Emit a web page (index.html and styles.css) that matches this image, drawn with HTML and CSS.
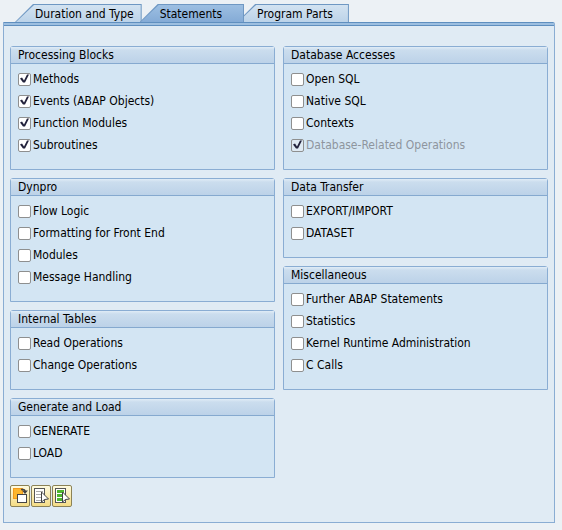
FILE: index.html
```html
<!DOCTYPE html>
<html lang="en">
<head>
  <title>Measurement Variant</title>
  <meta charset="UTF-8">
  <link rel="stylesheet" href="styles.css">
</head>
<body>

<div class="tabs" role="tablist">
  <button class="tab tab-first" role="tab">Duration and Type</button>
  <button class="tab active" role="tab" aria-selected="true">Statements</button>
  <button class="tab" role="tab">Program Parts</button>
</div>

<form class="panel">
  <div class="columns">
    <div class="column">
      <section class="group">
        <h2>Processing Blocks</h2>
        <label><input type="checkbox" checked>Methods</label>
        <label><input type="checkbox" checked>Events (ABAP Objects)</label>
        <label><input type="checkbox" checked>Function Modules</label>
        <label><input type="checkbox" checked>Subroutines</label>
      </section>
      <section class="group">
        <h2>Dynpro</h2>
        <label><input type="checkbox">Flow Logic</label>
        <label><input type="checkbox">Formatting for Front End</label>
        <label><input type="checkbox">Modules</label>
        <label><input type="checkbox">Message Handling</label>
      </section>
      <section class="group">
        <h2>Internal Tables</h2>
        <label><input type="checkbox">Read Operations</label>
        <label><input type="checkbox">Change Operations</label>
      </section>
      <section class="group">
        <h2>Generate and Load</h2>
        <label><input type="checkbox">GENERATE</label>
        <label><input type="checkbox">LOAD</label>
      </section>
    </div>

    <div class="column">
      <section class="group">
        <h2>Database Accesses</h2>
        <label><input type="checkbox">Open SQL</label>
        <label><input type="checkbox">Native SQL</label>
        <label><input type="checkbox">Contexts</label>
        <label class="disabled"><input type="checkbox" checked disabled>Database-Related Operations</label>
      </section>
      <section class="group">
        <h2>Data Transfer</h2>
        <label><input type="checkbox">EXPORT/IMPORT</label>
        <label><input type="checkbox">DATASET</label>
      </section>
      <section class="group">
        <h2>Miscellaneous</h2>
        <label><input type="checkbox">Further ABAP Statements</label>
        <label><input type="checkbox">Statistics</label>
        <label><input type="checkbox">Kernel Runtime Administration</label>
        <label><input type="checkbox">C Calls</label>
      </section>
    </div>
  </div>

  <div class="toolbar">
    <button type="button" class="tool" aria-label="Default settings">
      <svg width="18" height="20" viewBox="0 0 18 20">
        <rect x="2" y="2" width="10" height="11" fill="#f39a1b"/>
        <rect x="3" y="3" width="8" height="9" fill="#fdb62c"/>
        <path d="M10 3.500h2q2 0 2 2.500" fill="none" stroke="#444" stroke-width="1.500"/>
        <path d="M11 4.500h6l-3 3.500z" fill="#444"/>
        <rect x="6.500" y="8.500" width="9" height="8" fill="#fff" stroke="#444"/>
      </svg>
    </button>
    <button type="button" class="tool" aria-label="Select all">
      <svg width="18" height="20" viewBox="0 0 18 20">
        <rect x="2.500" y="2.500" width="10" height="14" fill="#fff" stroke="#555"/>
        <path d="M4 5.500h7M4 8.500h7M4 11.500h5M4 14.500h5" stroke="#aaa"/>
        <path d="M9.500 6v10l3-2.500 4-.5z" fill="#fff" stroke="#444"/>
      </svg>
    </button>
    <button type="button" class="tool" aria-label="Deselect all">
      <svg width="18" height="20" viewBox="0 0 18 20">
        <rect x="2.500" y="2.500" width="10" height="14" fill="#fff" stroke="#555"/>
        <path d="M4 5.500h7M4 9.500h7M4 13.500h7" stroke="#4fb52e" stroke-width="3"/>
        <path d="M9.500 6v10l3-2.500 4-.5z" fill="#fff" stroke="#444"/>
      </svg>
    </button>
  </div>
</form>

</body>
</html>
```
FILE: styles.css
```css
body {
    margin: 0;
    padding: 4px 7px 7px 3px;
    background-color: #ecf1f5;
    color: #000;
    font-family: "DejaVu Sans Condensed", Tahoma, sans-serif;
    font-size: 12px;
}
button, input {
    font: inherit;
    color: inherit;
}

/* tabs */
.tabs {
    display: flex;
    padding-left: 12px;
}
.tab {
    position: relative;
    z-index: 0;
    height: 18px;
    margin: 0 0 0 -7px;
    padding: 2px 16px 0 20px;
    border: 0;
    background: #6f98c3;
    line-height: 16px;
    white-space: nowrap;
    clip-path: polygon(18px 0, 100% 0, 100% 100%, 0 100%);
}
.tab::before {
    content: "";
    position: absolute;
    z-index: -1;
    inset: 1px 1px 0 1px;
    background: linear-gradient(#d3e3f1, #bcd3e9);
    clip-path: polygon(18px 0, 100% 0, 100% 100%, 0 100%);
}
.tab-first {
    margin-left: 0;
    padding-right: 8px;
}
.tab.active {
    z-index: 1;
    margin-left: -2px;
    padding-right: 22px;
}
.tab.active::before {
    background: linear-gradient(#9dbfe2, #84abd6);
}

/* panel */
.panel {
    padding: 24px 6px 15px;
    border: 1px solid #8aadd3;
    border-top: 0;
    border-radius: 0 2px 0 0;
    background: linear-gradient(#5f8fbf 1px, #9dbfe0 1px, #9dbfe0 3px, #5f8fbf 3px, #5f8fbf 4px, #e0ebf4 4px);
}
.columns {
    display: grid;
    grid-template-columns: 1fr 1fr;
    gap: 8px;
}
.column {
    display: flex;
    flex-direction: column;
    gap: 8px;
}
.group {
    padding-bottom: 13px;
    border: 1px solid #8aadd3;
    border-radius: 3px 3px 0 0;
    background-color: #d3e5f3;
}
.group h2 {
    margin: 0 0 4px;
    padding: 0 7px;
    border-bottom: 1px solid #85a9cf;
    background: linear-gradient(#e0ecf6, #cbddee 3px, #bcd2e8);
    font-size: 12px;
    font-weight: normal;
    line-height: 16px;
}
.group label {
    display: flex;
    align-items: center;
    gap: 2px;
    height: 22px;
    padding-left: 7px;
}
.group label.disabled {
    color: #8e959e;
}

input[type="checkbox"] {
    appearance: none;
    width: 13px;
    height: 13px;
    margin: 0;
    border: 1px solid #8e8f8f;
    border-radius: 2px;
    background-color: #fff;
}
input[type="checkbox"]:checked::before {
    content: "";
    display: block;
    height: 11px;
    background-color: #22223c;
    clip-path: polygon(1px 5px, 3px 4px, 5px 7px, 8px 1px, 10px 1px, 6px 9px, 4px 9px);
}
input[type="checkbox"]:disabled {
    background-color: #dfeaf3;
}

/* buttons under the groups */
.toolbar {
    display: flex;
    gap: 1px;
    margin-top: 7px;
}
.tool {
    width: 20px;
    height: 22px;
    padding: 0;
    border: 1px solid #8c8256;
    border-radius: 2px;
    background: linear-gradient(#fffbe0, #f5dc85);
}
.tool svg {
    display: block;
}
```
